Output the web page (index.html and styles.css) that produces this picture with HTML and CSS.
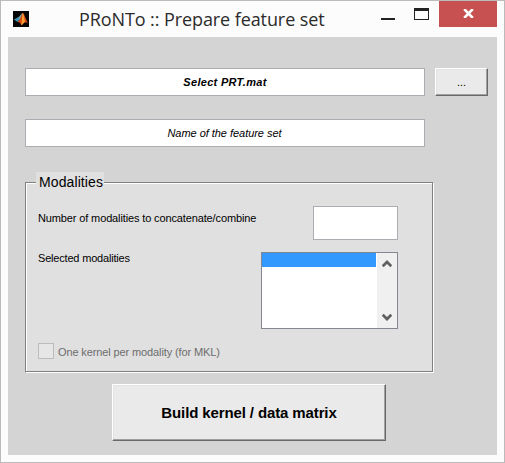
FILE: index.html
```html
<!DOCTYPE html>
<html lang="en">
<head>
<meta charset="utf-8">
<title>PRoNTo :: Prepare feature set</title>
<link rel="stylesheet" href="styles.css">
</head>
<body>
<div class="window">
  <header class="titlebar">
    <svg class="app-icon" width="16" height="16" viewBox="0 0 16 16">
      <rect width="16" height="16" fill="#050505"/>
      <path d="M1 8.5 5 6.3 6.8 8.2 4.5 11Z" fill="#3e93b5"/>
      <path d="M5 6.3C7 5.7 7.6 3 9.5 2L8.2 7 6.8 9.2Z" fill="#6aa5b2"/>
      <path d="M4.5 11 6.6 8.8C8 6.2 8.5 3 9.8 1.8 11.5 3 12.7 8.5 15 12 12.6 10.3 11 11.2 8.7 14.2 7.7 13.9 7.7 10.7 4.5 11Z" fill="#d94b16"/>
      <path d="M9.8 1.8C8.7 5 9.3 10.5 8.3 13.5L8.7 14.2C10.5 12.5 11 11.3 12 10.8 11.2 8 11 4 9.8 1.8Z" fill="#f6a032"/>
    </svg>
    <h1 class="title">PRoNTo :: Prepare feature set</h1>
    <div class="controls">
      <svg width="59" height="26" viewBox="0 0 59 26" shape-rendering="crispEdges">
        <path d="M1 17h14v2H1z" fill="#222"/>
        <path d="M34 7h15v12H34zM35 10v8h13v-8z" fill="#222" fill-rule="evenodd"/>
      </svg>
      <div class="close">
        <svg width="11" height="9" viewBox="0 0 11 9"><path d="M1.2 0 9.8 9M9.8 0 1.2 9" stroke="#fff" stroke-width="2.6"/></svg>
      </div>
    </div>
  </header>
  <main class="form">
    <div class="file-row">
      <div class="field bold"><span class="t-select">Select PRT.mat</span></div>
      <div class="button browse">...</div>
    </div>
    <div class="field name"><span class="t-name">Name of the feature set</span></div>
    <section class="panel">
      <h2 class="legend"><span>Modalities</span></h2>
      <div class="row count-row">
        <span class="label t-number">Number of modalities to concatenate/combine</span>
        <div class="count"></div>
      </div>
      <div class="row list-row">
        <span class="label t-selected">Selected modalities</span>
        <div class="list">
          <div class="items"><div class="selected"></div></div>
          <div class="scroll">
            <svg width="10" height="8" viewBox="0 0 10 8"><path d="M.7 6.3 5 2 9.3 6.3" fill="none" stroke="#606060" stroke-width="2.7"/></svg>
            <svg width="10" height="8" viewBox="0 0 10 8"><path d="M.7 1.7 5 6 9.3 1.7" fill="none" stroke="#606060" stroke-width="2.7"/></svg>
          </div>
        </div>
      </div>
      <div class="check-row"><div class="checkbox"></div><span class="t-kernel">One kernel per modality (for MKL)</span></div>
    </section>
    <div class="button build"><span class="t-build">Build kernel / data matrix</span></div>
  </main>
</div>
</body>
</html>
```

FILE: styles.css
```css
* { box-sizing: border-box; }
body { margin: 0; font: 11px/13px "Liberation Sans", Arial, sans-serif; color: #000; }
span, h1, h2 { white-space: nowrap; }
.window { width: 505px; height: 463px; border: 1px solid #bbb; background: #fcfcfc; padding: 0 7px 7px; }
.titlebar { height: 36px; display: flex; align-items: flex-start; }
.app-icon { margin: 10px 0 0 5px; flex: none; }
.title { margin: 6px 0 0 50px; font: 400 18px/25px "Open Sans", "Noto Sans", sans-serif; letter-spacing: -0.09px; color: #2b2b2b; }
.controls { display: flex; margin-left: auto; }
.close { width: 58px; height: 26px; background: #c75050; display: flex; justify-content: center; padding-top: 8px; }
.form { height: 418px; background: #d4d4d4; padding: 31px 0 0 17px; }
.file-row { display: flex; gap: 10px; }
.field { width: 400px; height: 28px; background: #fff; border: 1px solid #abadb3; display: flex; align-items: center; justify-content: center; font-style: italic; }
.bold { font-weight: bold; }
.name { margin-top: 23px; }
.t-select { letter-spacing: 0.3px; }
.t-name { letter-spacing: -0.04px; margin-right: 1px; }
.t-number { letter-spacing: -0.13px; }
.t-selected { letter-spacing: -0.19px; }
.t-kernel { letter-spacing: -0.12px; }
.t-build { letter-spacing: -0.12px; }
.button { background: #eaeaea; border: 1px solid; border-color: #fff #696969 #696969 #fff; box-shadow: inset -1px -1px #a0a0a0, inset 1px 1px #e3e3e3; display: flex; align-items: center; justify-content: center; }
.browse { width: 53px; height: 28px; }
.panel { width: 409px; height: 191px; margin-top: 35px; background: #e0e0e0; border: 1px solid; border-color: #808080 #fff #fff #808080; box-shadow: inset -1px -1px #808080, inset 1px 1px #fff; padding: 0 0 0 12px; }
.legend { width: 68px; height: 17px; margin: -11px 0 0 -2px; padding-left: 3px; background: #e0e0e0; font-size: 14px; font-weight: 400; line-height: 20px; letter-spacing: 0.1px; }
.row { display: flex; justify-content: space-between; width: 360px; }
.count-row { margin-top: 17px; height: 34px; }
.label { padding-top: 6px; }
.count { width: 85px; height: 34px; background: #fff; border: 1px solid #abadb3; }
.list-row { margin-top: 12px; height: 77px; }
.list-row .label { padding-top: 0; }
.list { width: 137px; height: 77px; border: 1px solid #828790; background: #fff; display: flex; }
.items { width: 115px; }
.selected { width: 114px; height: 14px; background: #3399ff; }
.scroll { width: 20px; background: #f0f0f0; display: flex; flex-direction: column; align-items: center; justify-content: space-between; padding: 7px 1px 7px 0; }
.check-row { display: flex; gap: 4px; margin-top: 14px; color: #6d6d6d; line-height: 19px; }
.checkbox { width: 16px; height: 16px; border: 1px solid #bcbcbc; background: #e6e6e6; }
.build { width: 274px; height: 57px; margin: 11px 0 0 87px; font-size: 15px; font-weight: bold; line-height: 18px; }
```
